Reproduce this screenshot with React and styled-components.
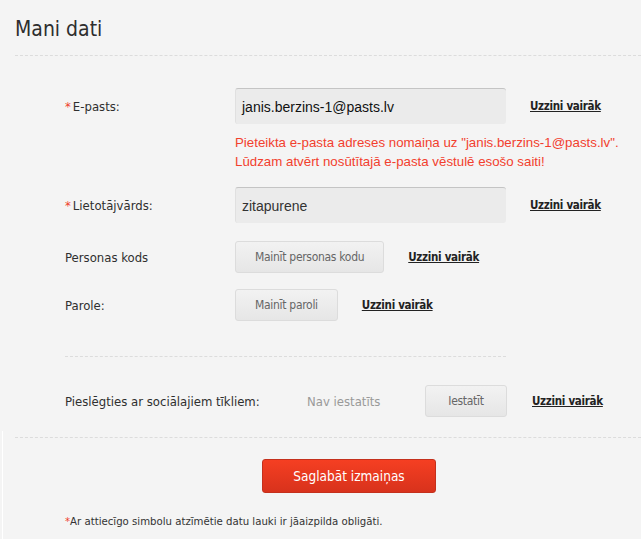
import React from "react";
import styled, { createGlobalStyle } from "styled-components";

const GlobalStyle = createGlobalStyle`
  html, body {
    margin: 0;
    padding: 0;
    background: #f4f4f4;
  }
  body {
    font-family: "Liberation Sans Narrow", "Arial Narrow", "DejaVu Sans Condensed", sans-serif;
    color: #333;
  }
`;

const Page = styled.div`
  width: 641px;
  height: 539px;
  overflow: hidden;
  background: #f4f4f4;
`;

const Header = styled.div`
  margin-left: 15px;
  height: 56px;
  border-bottom: 1px dashed #dcdcdc;
  box-sizing: border-box;
  padding-top: 16px;
`;

const Title = styled.h1`
  margin: 0;
  font-size: 21px;
  line-height: 26px;
  font-weight: normal;
  color: #2e2e2e;
`;

const Form = styled.div`
  padding: 32px 0 0 65px;
`;

const Row = styled.div`
  display: flex;
  align-items: center;
  margin-top: ${(p) => p.$gap || 0}px;
`;

const Label = styled.div`
  width: ${(p) => p.$width || 170}px;
  flex-shrink: 0;
  font-size: 13px;
  color: #2f2f2f;
  white-space: nowrap;
`;

const Star = styled.span`
  color: #ef3e2c;
  margin-right: ${(p) => (p.$tight ? 0 : 2)}px;
`;

const Input = styled.div`
  width: 271px;
  height: 36px;
  box-sizing: border-box;
  background: #ebebeb;
  border-top: 1px solid #c4c4c4;
  border-left: 1px solid #e0e0e0;
  border-radius: 3px;
  display: flex;
  align-items: center;
  padding-left: 6px;
  font-family: "Liberation Sans", Arial, sans-serif;
  font-size: 14px;
  color: ${(p) => (p.$dark ? "#111" : "#333")};
`;

const More = styled.a`
  margin-left: ${(p) => p.$gap || 24}px;
  font-size: 11.5px;
  letter-spacing: -0.3px;
  font-weight: bold;
  color: #222;
  text-decoration: underline;
  cursor: pointer;
  white-space: nowrap;
`;

const Notice = styled.div`
  margin: 9px 0 0 170px;
  font-family: "Liberation Sans", Arial, sans-serif;
  font-size: 13.3px;
  line-height: 19px;
  color: #f23f2e;
`;

const GrayButton = styled.button`
  height: 32px;
  box-sizing: border-box;
  padding: 0 19px;
  min-width: ${(p) => p.$min || 0}px;
  border: 1px solid #dcdcdc;
  border-radius: 3px;
  background: linear-gradient(#f2f2f2, #e6e6e6);
  font-family: inherit;
  font-size: 12px;
  letter-spacing: -0.3px;
  color: #666;
  cursor: pointer;
`;

const Divider = styled.div`
  width: 441px;
  margin-top: 35px;
  border-top: 1px dashed #dcdcdc;
`;

const Status = styled.span`
  font-size: 13px;
  color: #999;
  width: 118px;
`;

const Bottom = styled.div`
  margin-top: 14px;
  margin-left: 2px;
  border-left: 1px solid #fff;
  padding-top: 6px;
  height: 120px;
`;

const BottomLine = styled.div`
  margin-left: 12px;
  border-top: 1px dashed #dcdcdc;
`;

const SaveWrap = styled.div`
  padding: 21px 0 0 259px;
`;

const SaveButton = styled.button`
  width: 174px;
  height: 34px;
  border: 1px solid #c4301c;
  border-radius: 3px;
  background: linear-gradient(#f53f22, #d8321c);
  color: #fff;
  font-family: inherit;
  font-size: 13.5px;
  cursor: pointer;
`;

const Note = styled.p`
  margin: 22px 0 0 62px;
  font-size: 11.3px;
  color: #333;
`;

export default function App() {
  return (
    <Page>
      <GlobalStyle />
      <Header>
        <Title>Mani dati</Title>
      </Header>
      <Form>
        <Row>
          <Label>
            <Star>*</Star>E-pasts:
          </Label>
          <Input $dark>janis.berzins-1@pasts.lv</Input>
          <More>Uzzini vairāk</More>
        </Row>
        <Notice>
          Pieteikta e-pasta adreses nomaiņa uz "janis.berzins-1@pasts.lv".
          <br />
          Lūdzam atvērt nosūtītajā e-pasta vēstulē esošo saiti!
        </Notice>
        <Row $gap={16}>
          <Label>
            <Star>*</Star>Lietotājvārds:
          </Label>
          <Input>zitapurene</Input>
          <More>Uzzini vairāk</More>
        </Row>
        <Row $gap={18}>
          <Label>Personas kods</Label>
          <GrayButton>Mainīt personas kodu</GrayButton>
          <More>Uzzini vairāk</More>
        </Row>
        <Row $gap={16}>
          <Label>Parole:</Label>
          <GrayButton>Mainīt paroli</GrayButton>
          <More>Uzzini vairāk</More>
        </Row>
        <Divider />
        <Row $gap={28}>
          <Label $width={242}>Pieslēgties ar sociālajiem tīkliem:</Label>
          <Status>Nav iestatīts</Status>
          <GrayButton $min={82}>Iestatīt</GrayButton>
          <More $gap={25}>Uzzini vairāk</More>
        </Row>
      </Form>
      <Bottom>
        <BottomLine />
        <SaveWrap>
          <SaveButton>Saglabāt izmaiņas</SaveButton>
        </SaveWrap>
        <Note>
          <Star $tight>*</Star>Ar attiecīgo simbolu atzīmētie datu lauki ir jāaizpilda obligāti.
        </Note>
      </Bottom>
    </Page>
  );
}
